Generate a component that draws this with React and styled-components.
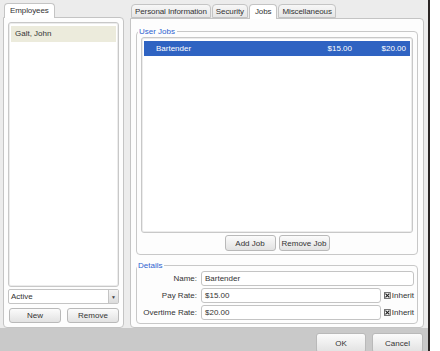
import styled, { createGlobalStyle } from "styled-components";

const Global = createGlobalStyle`
  html, body { margin: 0; padding: 0; background: #ffffff; }
  body { font-family: "Liberation Sans", Arial, sans-serif; font-size: 8px; color: #333; }
`;

const Screen = styled.div`
  width: 440px;
  height: 351px;
  overflow: hidden;
  display: flex;
  background: #ffffff;
`;

const Window = styled.div`
  width: 428px;
  height: 351px;
  flex-shrink: 0;
  display: flex;
  flex-direction: column;
  background: #ececec;
  border-right: 2px solid #2a2524;
  overflow: hidden;
`;

const Main = styled.div`
  display: flex;
  gap: 6px;
  padding: 3px 4px 0 3px;
  height: 328px;
  flex-shrink: 0;
  box-sizing: border-box;
`;

const Column = styled.div`
  display: flex;
  flex-direction: column;
  width: ${(p) => p.w}px;
  flex-shrink: 0;
  padding-top: ${(p) => p.top || 0}px;
  box-sizing: border-box;
`;

const TabBar = styled.div`
  display: flex;
  height: 14px;
  padding-left: 1px;
  position: relative;
  z-index: 1;
`;

const Tab = styled.div`
  height: ${(p) => (p.active ? 15 : 14)}px;
  box-sizing: border-box;
  padding: 2px ${(p) => (p.active ? 5 : 3)}px 0;
  border: 1px solid #c4c4c4;
  border-bottom: ${(p) => (p.active ? "none" : "1px solid #c4c4c4")};
  border-radius: 4px 4px 0 0;
  margin-right: 1px;
  background: ${(p) => (p.active ? "#ffffff" : "linear-gradient(#f7f7f7, #e6e6e6)")};
  color: #333;
  white-space: nowrap;
  line-height: 10px;
  letter-spacing: -0.1px;
`;

const Panel = styled.div`
  flex: 1;
  background: #fdfdfd;
  border: 1px solid #c4c4c4;
  border-radius: 0 4px 4px 4px;
  display: flex;
  flex-direction: column;
  padding: ${(p) => p.pad || "4px"};
  box-sizing: border-box;
`;

const ListBox = styled.div`
  flex: 1;
  background: #ffffff;
  border: 1px solid #c8c8c8;
  border-radius: 3px;
  box-shadow: inset 0 0 0 1px #ececec;
  padding: 3px 2px;
`;

const EmployeeRow = styled.div`
  height: 16px;
  line-height: 16px;
  padding-left: 4px;
  background: #ecebdc;
`;

const Select = styled.div`
  margin-top: 2px;
  height: 15px;
  border: 1px solid #c4c4c4;
  border-radius: 2px;
  background: #ffffff;
  display: flex;
  align-items: center;
  justify-content: space-between;
  padding-left: 2px;
  box-sizing: border-box;
`;

const SelectArrow = styled.div`
  width: 9px;
  height: 13px;
  border-left: 1px solid #c4c4c4;
  background: linear-gradient(#f4f4f4, #dcdcdc);
  display: flex;
  align-items: center;
  justify-content: center;
  font-size: 5px;
  color: #444;
`;

const ButtonRow = styled.div`
  display: flex;
  gap: ${(p) => p.gap || 6}px;
  justify-content: ${(p) => p.justify || "space-between"};
  margin-top: ${(p) => p.mt || 4}px;
  padding: 0 ${(p) => p.px || 0}px;
`;

const Button = styled.div`
  width: ${(p) => p.w}px;
  height: ${(p) => p.h || 15}px;
  flex-shrink: 0;
  box-sizing: border-box;
  border: 1px solid #b9b9b9;
  border-radius: 3px;
  background: linear-gradient(#fbfbfb, #e2e2e2);
  display: flex;
  align-items: center;
  justify-content: center;
  color: #333;
`;

const FieldSet = styled.fieldset`
  margin: ${(p) => p.m || 0};
  padding: ${(p) => p.pad || "2px 4px 4px"};
  border: 1px solid #c8c8c8;
  border-radius: 4px;
  display: flex;
  flex-direction: column;
  flex: ${(p) => p.grow || "none"};
  min-height: 0;
`;

const Legend = styled.legend`
  color: #2e62d0;
  padding: 0 2px 0 1px;
  margin-left: -3px;
  line-height: 9px;
`;

const JobRow = styled.div`
  display: flex;
  height: 15px;
  line-height: 15px;
  background: #2f63c2;
  color: #ffffff;
  padding: 0 4px 0 12px;
`;

const JobName = styled.span`
  flex: 1;
`;

const JobRate = styled.span`
  width: ${(p) => p.w}px;
  text-align: right;
`;

const DetailRow = styled.div`
  display: flex;
  align-items: center;
  margin-top: ${(p) => p.mt ?? 2}px;
`;

const Label = styled.div`
  width: 57px;
  text-align: right;
  padding-right: 4px;
`;

const Input = styled.div`
  flex: 1;
  height: 15px;
  box-sizing: border-box;
  border: 1px solid #c4c4c4;
  border-radius: 3px;
  background: #ffffff;
  padding-left: 3px;
  line-height: 13px;
`;

const Inherit = styled.div`
  width: 33px;
  display: flex;
  align-items: center;
  padding-left: 3px;
  box-sizing: border-box;
`;

const Check = styled.svg`
  width: 7px;
  height: 7px;
  margin-right: 1px;
`;

const BottomBar = styled.div`
  flex: 1;
  background: #c9c9c9;
  display: flex;
  justify-content: flex-end;
  gap: 6px;
  padding: 5px 5px 0 0;
`;

const InheritBox = () => (
  <Inherit>
    <Check viewBox="0 0 7 7">
      <rect x="0.5" y="0.5" width="6" height="6" fill="#fff" stroke="#666" />
      <path d="M1.5 1.5 L5.5 5.5 M5.5 1.5 L1.5 5.5" stroke="#222" strokeWidth="1.2" />
    </Check>
    Inherit
  </Inherit>
);

export default function App() {
  return (
    <Screen>
      <Global />
      <Window>
        <Main>
          <Column w={121}>
            <TabBar>
              <Tab active>Employees</Tab>
            </TabBar>
            <Panel>
              <ListBox>
                <EmployeeRow>Galt, John</EmployeeRow>
              </ListBox>
              <Select>
                Active
                <SelectArrow>▼</SelectArrow>
              </Select>
              <ButtonRow px={1}>
                <Button w={52}>New</Button>
                <Button w={52}>Remove</Button>
              </ButtonRow>
            </Panel>
          </Column>
          <Column w={294} top={1}>
            <TabBar>
              <Tab>Personal Information</Tab>
              <Tab>Security</Tab>
              <Tab active>Jobs</Tab>
              <Tab>Miscellaneous</Tab>
            </TabBar>
            <Panel pad="8px 5px 3px">
              <FieldSet grow="1" pad="1px 4px 3px">
                <Legend>User Jobs</Legend>
                <ListBox>
                  <JobRow>
                    <JobName>Bartender</JobName>
                    <JobRate w={40}>$15.00</JobRate>
                    <JobRate w={54}>$20.00</JobRate>
                  </JobRow>
                </ListBox>
                <ButtonRow justify="center" gap={3} mt={2}>
                  <Button w={51} h={16}>Add Job</Button>
                  <Button w={51} h={16}>Remove Job</Button>
                </ButtonRow>
              </FieldSet>
              <FieldSet pad="1px 3px 3px" m="6px 0 0">
                <Legend>Details</Legend>
                <DetailRow mt={0}>
                  <Label>Name:</Label>
                  <Input>Bartender</Input>
                </DetailRow>
                <DetailRow>
                  <Label>Pay Rate:</Label>
                  <Input>$15.00</Input>
                  <InheritBox />
                </DetailRow>
                <DetailRow>
                  <Label>Overtime Rate:</Label>
                  <Input>$20.00</Input>
                  <InheritBox />
                </DetailRow>
              </FieldSet>
            </Panel>
          </Column>
        </Main>
        <BottomBar>
          <Button w={50} h={20}>OK</Button>
          <Button w={51} h={20}>Cancel</Button>
        </BottomBar>
      </Window>
    </Screen>
  );
}
